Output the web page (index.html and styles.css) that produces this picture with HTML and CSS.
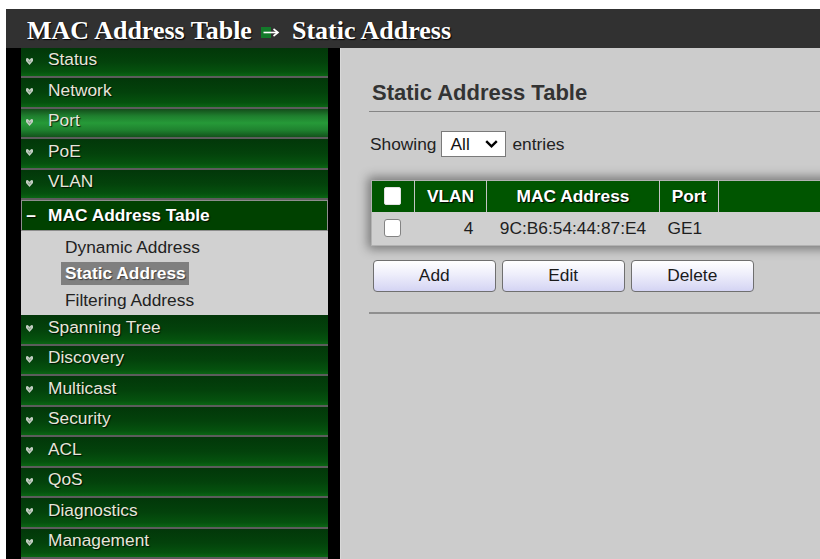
FILE: index.html
```html
<!DOCTYPE html>
<html lang="en">
<head>
<meta charset="utf-8">
<title>MAC Address Table - Static Address</title>
<link rel="stylesheet" href="styles.css">
</head>
<body>
<svg width="0" height="0" class="defs" aria-hidden="true">
  <symbol id="menu-bullet" viewBox="0 0 8 8">
    <path d="M0 0.5 L2 0 L4 2 L6 0 L8 0.5 L8 3.5 L4 8 L0 3.5 Z" fill="#c2cdc2"/>
    <path d="M2.2 3 L4 4.6 L5.8 3" fill="none" stroke="#6a836a" stroke-width="0.9"/>
  </symbol>
</svg>
<div class="page">
  <header class="topbar">
    <h1>MAC Address Table<svg class="crumb-arrow" width="19" height="11" viewBox="0 0 19 11"><rect x="0" y="0" width="10" height="11" fill="#137a2a"/><path d="M2.5 5.5 H16" stroke="#fff" stroke-width="1.6"/><path d="M12.5 2 L17 5.5 L12.5 9" fill="none" stroke="#fff" stroke-width="1.6"/></svg>Static Address</h1>
  </header>
  <div class="main">
    <nav class="sidebar">
      <ul class="menu">
        <li><a class="menu-link"><svg class="bullet"><use href="#menu-bullet"/></svg>Status</a></li>
        <li><a class="menu-link"><svg class="bullet"><use href="#menu-bullet"/></svg>Network</a></li>
        <li><a class="menu-link hover"><svg class="bullet"><use href="#menu-bullet"/></svg>Port</a></li>
        <li><a class="menu-link"><svg class="bullet"><use href="#menu-bullet"/></svg>PoE</a></li>
        <li><a class="menu-link"><svg class="bullet"><use href="#menu-bullet"/></svg>VLAN</a></li>
        <li class="open">
          <a class="menu-link active"><span class="minus">–</span>MAC Address Table</a>
          <ul class="submenu">
            <li><a class="sub-link">Dynamic Address</a></li>
            <li><a class="sub-link current">Static Address</a></li>
            <li><a class="sub-link">Filtering Address</a></li>
          </ul>
        </li>
        <li><a class="menu-link"><svg class="bullet"><use href="#menu-bullet"/></svg>Spanning Tree</a></li>
        <li><a class="menu-link"><svg class="bullet"><use href="#menu-bullet"/></svg>Discovery</a></li>
        <li><a class="menu-link"><svg class="bullet"><use href="#menu-bullet"/></svg>Multicast</a></li>
        <li><a class="menu-link"><svg class="bullet"><use href="#menu-bullet"/></svg>Security</a></li>
        <li><a class="menu-link"><svg class="bullet"><use href="#menu-bullet"/></svg>ACL</a></li>
        <li><a class="menu-link"><svg class="bullet"><use href="#menu-bullet"/></svg>QoS</a></li>
        <li><a class="menu-link"><svg class="bullet"><use href="#menu-bullet"/></svg>Diagnostics</a></li>
        <li><a class="menu-link"><svg class="bullet"><use href="#menu-bullet"/></svg>Management</a></li>
      </ul>
    </nav>
    <main class="content">
      <h2 class="section-title">Static Address Table</h2>
      <div class="showing">
        <span>Showing</span>
        <span class="select"><span class="select-value">All</span><svg class="chevron" width="13" height="8" viewBox="0 0 13 8"><path d="M1.2 1.2 L6.5 6.3 L11.8 1.2" fill="none" stroke="#000" stroke-width="2.4"/></svg></span>
        <span class="entries">entries</span>
      </div>
      <table class="data-table">
        <colgroup>
          <col class="col-check"><col class="col-vlan"><col class="col-mac"><col class="col-port"><col>
        </colgroup>
        <thead>
          <tr>
            <th class="cell-check"><input type="checkbox" class="check head-check"></th>
            <th>VLAN</th>
            <th>MAC Address</th>
            <th>Port</th>
            <th></th>
          </tr>
        </thead>
        <tbody>
          <tr>
            <td class="cell-check"><input type="checkbox" class="check"></td>
            <td class="cell-vlan">4</td>
            <td class="cell-mac">9C:B6:54:44:87:E4</td>
            <td class="cell-port">GE1</td>
            <td></td>
          </tr>
        </tbody>
      </table>
      <div class="actions">
        <button class="btn" type="button">Add</button>
        <button class="btn" type="button">Edit</button>
        <button class="btn" type="button">Delete</button>
      </div>
      <div class="rule"></div>
    </main>
  </div>
</div>
</body>
</html>
```
FILE: styles.css
```css
html, body {
  margin: 0;
  overflow: hidden;
  background: #fff;
}

body {
  font-family: "Liberation Sans", Arial, sans-serif;
  font-size: 13pt;
}

.defs {
  position: absolute;
}

.page {
  padding: 9px 0 0 6px;
}

/* breadcrumb bar */
.topbar {
  height: 38.5px;
  box-sizing: border-box;
  background: #313131;
  padding: 7px 0 0 21px;
  overflow: hidden;
}

.topbar h1 {
  margin: 0;
  font: bold 26px/30px "Liberation Serif", "Times New Roman", serif;
  color: #fff;
  white-space: nowrap;
  text-shadow: 1px 1px 1px #000;
}

.crumb-arrow {
  vertical-align: 1px;
  margin: 0 12px 0 9px;
}

.main {
  display: flex;
}

/* left navigation */
.sidebar {
  flex: none;
  width: 334px;
  box-sizing: border-box;
  padding: 0 12px 0 15px;
  background: #000;
}

.menu,
.submenu {
  list-style: none;
  margin: 0;
  padding: 0;
}

.menu-link {
  display: flex;
  align-items: center;
  box-sizing: border-box;
  height: 30.5px;
  padding: 0 0 4px 5px;
  border-bottom: 2px solid #5c5c5c;
  background: linear-gradient(#023709 0%, #03420b 50%, #05520e 85%, #0a6613 100%);
  color: #e6e6da;
  text-shadow: 1px 1px 1px rgba(0, 0, 0, 0.8);
  white-space: nowrap;
}

.menu-link.hover {
  background: linear-gradient(#134d1a 0%, #1f7f2e 25%, #269a38 50%, #1f822f 75%, #12531b 100%);
}

.bullet {
  flex: none;
  width: 7px;
  height: 7px;
  margin: 3px 15px 0 0;
}

.menu-link.active {
  height: 31px;
  padding: 0 0 0 4px;
  border: 1px solid #8e8e8e;
  background: #004100;
  color: #fff;
  font-weight: bold;
}

.minus {
  width: 10px;
  margin-right: 12px;
  text-align: center;
}

.submenu {
  background: #d1d1d1;
  padding: 4.5px 0 4px 40px;
}

.submenu li + li {
  margin-top: 4px;
}

.sub-link {
  display: block;
  width: fit-content;
  padding: 0 3px 0 4px;
  line-height: 22.5px;
  color: #222;
}

.sub-link.current {
  background: #7f7f7f;
  color: #fff;
  font-weight: bold;
  text-shadow: 1px 1px 1px #3a3a3a;
}

/* main panel */
.content {
  flex: 1;
  min-width: 0;
  overflow: hidden;
  background: #cccccc;
  border-left: 1px solid #d9d9d9;
  padding: 32.5px 0 0 28px;
  color: #222;
}

.section-title {
  margin: 0;
  padding: 0 0 6px 3px;
  font-size: 22px;
  line-height: 25px;
  font-weight: bold;
  color: #333;
  border-bottom: 1px solid #858585;
}

.showing {
  display: flex;
  align-items: center;
  gap: 5px;
  height: 26px;
  margin: 19px 0 0 1px;
}

.select {
  display: flex;
  align-items: center;
  justify-content: space-between;
  box-sizing: border-box;
  width: 65px;
  height: 26px;
  padding: 0 7px 0 8px;
  background: #fff;
  border: 1px solid #7a7a7a;
  color: #111;
}

.entries {
  margin-left: 1px;
}

.data-table {
  margin: 22.5px 0 0 2px;
  width: 720px;
  border-collapse: collapse;
  border: 1px solid #b2b2b2;
  box-shadow: 0 0 10px 3px rgba(0, 0, 0, 0.42);
  table-layout: fixed;
}

.col-check { width: 43px; }
.col-vlan { width: 72px; }
.col-mac { width: 173px; }
.col-port { width: 59px; }

.data-table th {
  height: 31px;
  padding: 0;
  background: #005500;
  color: #fff;
  font-weight: bold;
  text-align: center;
  text-shadow: 1px 1px 1px #000;
  border-left: 1px solid #c4c4c4;
}

.data-table th:first-child {
  border-left: none;
}

.data-table td {
  height: 33px;
  padding: 0;
  background: #cfcfcf;
  color: #1e1e1e;
}

.data-table .cell-check {
  padding-left: 12px;
  text-align: left;
}

.data-table .cell-vlan {
  text-align: right;
  padding-right: 13px;
}

.data-table .cell-mac {
  text-align: center;
}

.data-table .cell-port {
  padding-left: 8px;
}

.check {
  appearance: none;
  display: block;
  width: 17px;
  height: 18px;
  margin: 0;
  background: #fff;
  border: 1px solid #838383;
  border-radius: 3px;
}

.head-check {
  border-color: #e2e2e2;
  border-radius: 2px;
}

.actions {
  display: flex;
  gap: 6.5px;
  margin: 14.5px 0 0 4px;
}

.btn {
  flex: none;
  width: 122.5px;
  height: 31.5px;
  padding: 0;
  border: 1px solid #6f6f6f;
  border-radius: 4px;
  background: linear-gradient(#ffffff 0%, #eeeefb 45%, #d4d4f3 100%);
  font: 13pt "Liberation Sans", Arial, sans-serif;
  color: #1b1b1b;
}

.rule {
  margin-top: 20px;
  height: 2px;
  background: #8f8f8f;
}
```
